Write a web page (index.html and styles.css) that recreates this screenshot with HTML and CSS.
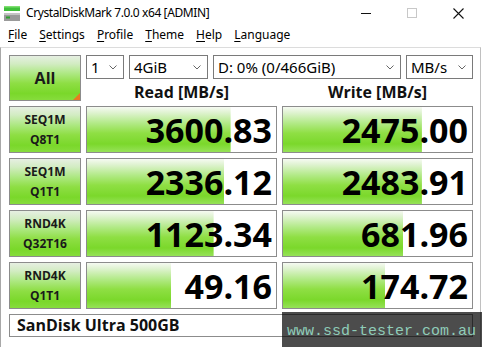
FILE: index.html
```html
<!DOCTYPE html>
<html lang="en">
<head>
<meta charset="utf-8">
<title>CrystalDiskMark 7.0.0 x64 [ADMIN]</title>
<link rel="stylesheet" href="styles.css">
</head>
<body>
<div class="window">
  <header class="titlebar">
    <svg class="app-icon" width="16" height="15" viewBox="0 0 16 15">
      <rect x="0" y="0" width="16" height="5" fill="#3fbf3a"/>
      <rect x="0" y="0" width="16" height="1.5" fill="#7fe070"/>
      <rect x="0" y="7" width="16" height="8" fill="#9a9a9a"/>
      <rect x="0" y="7" width="16" height="2" fill="#c4c4c4"/>
      <rect x="2" y="10.5" width="4" height="2" fill="#2f9f2f"/>
    </svg>
    <span class="title">CrystalDiskMark 7.0.0 x64 [ADMIN]</span>
    <div class="controls">
      <span class="ctl"><svg width="10" height="10" viewBox="0 0 10 10"><line x1="0" y1="5.5" x2="10" y2="5.5" stroke="#111" stroke-width="1"/></svg></span>
      <span class="ctl"><svg width="10" height="10" viewBox="0 0 10 10"><rect x="0.5" y="0.5" width="9" height="9" fill="none" stroke="#c8c8c8" stroke-width="1"/></svg></span>
      <span class="ctl"><svg width="11" height="11" viewBox="0 0 11 11"><path d="M0.5 0.5 L10.5 10.5 M10.5 0.5 L0.5 10.5" stroke="#111" stroke-width="1.1"/></svg></span>
    </div>
  </header>
  <nav class="menu">
    <span><u>F</u>ile</span>
    <span><u>S</u>ettings</span>
    <span><u>P</u>rofile</span>
    <span><u>T</u>heme</span>
    <span><u>H</u>elp</span>
    <span><u>L</u>anguage</span>
  </nav>
  <main class="content">
    <div class="btn all">All</div>
    <div class="combos">
      <div class="combo c-count"><span>1</span><svg width="8" height="5" viewBox="0 0 8 5"><polyline points="0.5,0.5 4,4 7.5,0.5" fill="none" stroke="#666" stroke-width="1"/></svg></div>
      <div class="combo c-size"><span>4GiB</span><svg width="8" height="5" viewBox="0 0 8 5"><polyline points="0.5,0.5 4,4 7.5,0.5" fill="none" stroke="#666" stroke-width="1"/></svg></div>
      <div class="combo c-drive"><span>D: 0% (0/466GiB)</span><svg width="8" height="5" viewBox="0 0 8 5"><polyline points="0.5,0.5 4,4 7.5,0.5" fill="none" stroke="#666" stroke-width="1"/></svg></div>
      <div class="combo c-unit"><span>MB/s</span><svg width="8" height="5" viewBox="0 0 8 5"><polyline points="0.5,0.5 4,4 7.5,0.5" fill="none" stroke="#666" stroke-width="1"/></svg></div>
    </div>
    <div class="head">Read [MB/s]</div>
    <div class="head">Write [MB/s]</div>

    <div class="btn label"><span>SEQ1M</span><span>Q8T1</span></div>
    <div class="cell" style="--w:76%">3600.83</div>
    <div class="cell" style="--w:73.5%">2475.00</div>

    <div class="btn label"><span>SEQ1M</span><span>Q1T1</span></div>
    <div class="cell" style="--w:72.5%">2336.12</div>
    <div class="cell" style="--w:73.5%">2483.91</div>

    <div class="btn label"><span>RND4K</span><span>Q32T16</span></div>
    <div class="cell" style="--w:67%">1123.34</div>
    <div class="cell" style="--w:63.5%">681.96</div>

    <div class="btn label"><span>RND4K</span><span>Q1T1</span></div>
    <div class="cell" style="--w:44.5%">49.16</div>
    <div class="cell" style="--w:54%">174.72</div>

    <div class="drive">SanDisk Ultra 500GB</div>
  </main>
  <div class="watermark">www.ssd-tester.com.au</div>
</div>
</body>
</html>
```

FILE: styles.css
```css
html, body {
  margin: 0;
  padding: 0;
  background: #ffffff;
}

.window {
  position: relative;
  width: 482px;
  height: 347px;
  overflow: hidden;
  background: #ffffff;
  font-family: "Noto Sans", "Open Sans", sans-serif;
  color: #000;
}

.titlebar {
  height: 26px;
  display: flex;
  align-items: center;
  font-size: 12px;
  line-height: 26px;
}

.app-icon {
  margin-left: 4px;
  margin-right: 6px;
  flex: none;
}

.title {
  white-space: nowrap;
  letter-spacing: -0.4px;
}

.controls {
  margin-left: auto;
  margin-right: 1px;
  display: flex;
  height: 26px;
}

.ctl {
  width: 46px;
  display: flex;
  align-items: center;
  justify-content: center;
}

.menu {
  height: 21px;
  box-sizing: border-box;
  padding: 0 0 3px 8px;
  display: flex;
  gap: 12px;
  font-size: 12px;
  line-height: 18px;
}

.menu u {
  text-decoration-thickness: 1px;
  text-underline-offset: 2px;
}

.content {
  border-top: 1px solid #dcdcdc;
  border-left: 1px solid #a8a8a8;
  border-right: 1px solid #c0c0c0;
  width: 481px;
  box-sizing: border-box;
  height: 300px;
  padding: 7px 0 0 8px;
  display: grid;
  grid-template-columns: 72px 191px 191px;
  grid-template-rows: 24px 17px 47px 47px 47px 47px 23px;
  column-gap: 5px;
  row-gap: 5px;
}

.btn {
  position: relative;
  box-sizing: border-box;
  border: 1px solid #8c8c8c;
  background: linear-gradient(#e6efe2 0%, #d2ecc2 18%, #ade882 40%, #8ede44 62%, #7ad82a 85%, #86dc3c 100%);
  font-family: "Open Sans", "Noto Sans", sans-serif;
  font-weight: 700;
  color: #1a1a1a;
  display: flex;
  flex-direction: column;
  align-items: center;
  justify-content: center;
}

.all {
  grid-row: 1 / span 2;
  font-size: 16px;
}

.all::after {
  content: "";
  position: absolute;
  right: 0;
  bottom: 0;
  width: 0;
  height: 0;
  border-style: solid;
  border-width: 0 0 7px 7px;
  border-color: transparent transparent #e87a22 transparent;
}

.label {
  font-size: 12px;
  line-height: 20px;
}

.combos {
  grid-column: 2 / span 2;
  display: flex;
  gap: 5px;
}

.combo {
  box-sizing: border-box;
  border: 1px solid #7a7a7a;
  background: #fff;
  display: flex;
  align-items: center;
  justify-content: space-between;
  padding: 0 6px 0 4px;
  font-size: 15px;
  line-height: 22px;
  white-space: nowrap;
}

.c-count { width: 38px; }
.c-size { width: 79px; }
.c-drive { width: 188px; }
.c-unit { width: 67px; }

.head {
  font-family: "Open Sans", "Noto Sans", sans-serif;
  font-weight: 700;
  font-size: 16px;
  line-height: 17px;
  text-align: center;
  color: #111;
  align-self: end;
}

.cell {
  box-sizing: border-box;
  border: 1px solid #8c8c8c;
  background: linear-gradient(#f6faf2 0%, #e0f3d2 12%, #b4ea8a 35%, #8fdf44 58%, #7bd82b 82%, #96e258 100%) no-repeat 0 0 / var(--w) 100%, #ffffff;
  font-family: "Open Sans", "Noto Sans", sans-serif;
  font-weight: 700;
  font-size: 34px;
  line-height: 43px;
  padding: 2px 4px 0 0;
  text-align: right;
  color: #000;
  overflow: hidden;
  white-space: nowrap;
}

.drive {
  grid-column: 1 / span 3;
  box-sizing: border-box;
  border: 1px solid #8c8c8c;
  background: #fff;
  font-family: "Open Sans", "Noto Sans", sans-serif;
  font-weight: 700;
  font-size: 16px;
  line-height: 21px;
  padding-left: 7px;
  color: #111;
}

.watermark {
  position: absolute;
  left: 282px;
  top: 312px;
  right: 0;
  bottom: 0;
  background: rgba(0, 0, 0, 0.7);
  color: #8fcdb9;
  font-family: "Liberation Mono", "DejaVu Sans Mono", monospace;
  font-size: 15px;
  line-height: 35px;
  padding: 2px 0 0 5px;
  box-sizing: border-box;
  white-space: nowrap;
}
```
